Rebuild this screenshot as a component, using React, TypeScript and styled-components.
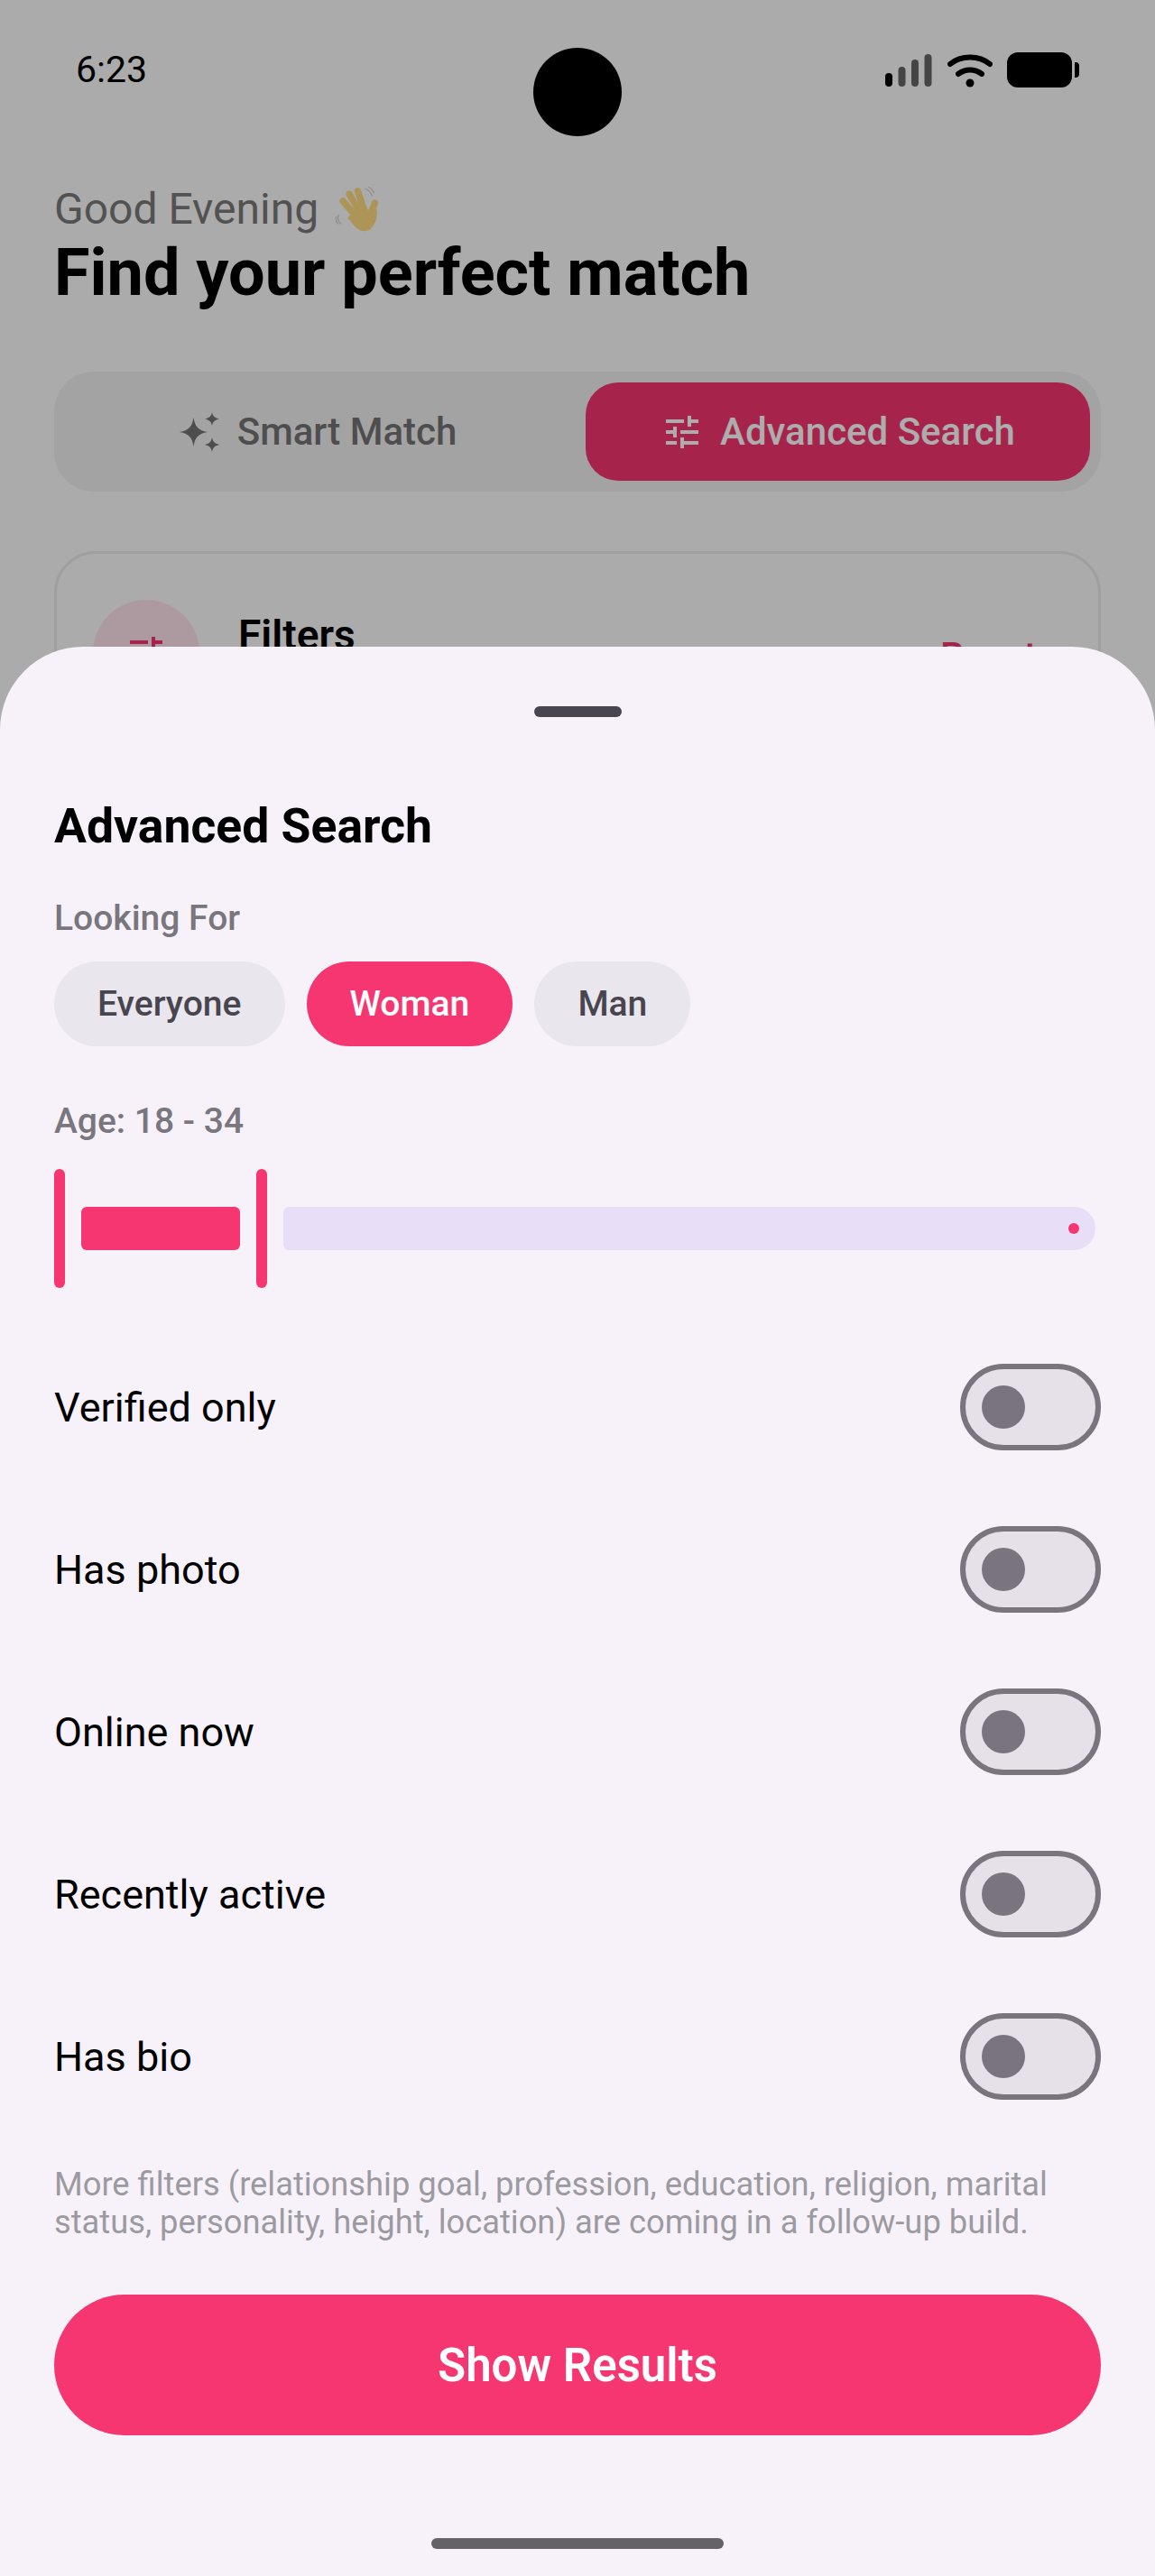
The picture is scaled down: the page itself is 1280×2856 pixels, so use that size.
import React from "react";
import styled, { createGlobalStyle } from "styled-components";

const GlobalStyle = createGlobalStyle`
  html, body {
    margin: 0;
    padding: 0;
    background: #ffffff;
    font-family: Roboto, "Liberation Sans", sans-serif;
  }
`;

const Screen = styled.div`
  position: relative;
  width: 1280px;
  height: 2856px;
  overflow: hidden;
  background: #fcfcfc;
`;

const Behind = styled.div`
  display: flex;
  flex-direction: column;
  padding: 0 60px;
`;

const StatusBar = styled.div`
  height: 204px;
  margin: 0 24px;
  padding-top: 54px;
  box-sizing: border-box;
  display: flex;
  justify-content: space-between;
  align-items: flex-start;
`;

const Clock = styled.span`
  font-size: 41px;
  line-height: 47px;
  color: #000;
`;

const StatusIcons = styled.div`
  display: flex;
  align-items: flex-start;
  padding-top: 4px;
`;

const Camera = styled.div`
  position: absolute;
  left: 591px;
  top: 53px;
  width: 98px;
  height: 98px;
  border-radius: 50%;
  background: #000;
  z-index: 3;
`;

const Greeting = styled.div`
  display: flex;
  align-items: center;
  gap: 9px;
  font-size: 48px;
  line-height: 56px;
  color: #7a7a7a;
  height: 56px;
`;

const Title = styled.h1`
  margin: 1px 0 0;
  font-size: 72px;
  line-height: 84px;
  font-weight: 700;
  color: #000;
`;

const Tabs = styled.div`
  margin-top: 67px;
  height: 133px;
  box-sizing: border-box;
  padding: 12px;
  border-radius: 44px;
  background: #f1f1f1;
  display: grid;
  grid-template-columns: 577px 559px;
`;

const Tab = styled.div<{ $active?: boolean }>`
  border-radius: 36px;
  display: flex;
  align-items: center;
  justify-content: center;
  gap: 18px;
  font-size: 42px;
  font-weight: 500;
  color: ${(p) => (p.$active ? "#fff" : "#747474")};
  background: ${(p) => (p.$active ? "#f53670" : "transparent")};
  padding-right: ${(p) => (p.$active ? "0" : "18px")};
`;

const FilterCard = styled.div`
  margin-top: 66px;
  height: 400px;
  box-sizing: border-box;
  border: 3px solid #ebebeb;
  border-radius: 46px;
  padding: 51px 68px 0 40px;
  display: flex;
  align-items: flex-start;
  gap: 43px;
`;

const IconDisc = styled.div`
  width: 118px;
  height: 118px;
  border-radius: 50%;
  background: #ffe4ed;
  display: flex;
  align-items: center;
  justify-content: center;
`;

const FilterLabel = styled.span`
  flex: 1;
  font-size: 46px;
  line-height: 54px;
  font-weight: 600;
  color: #000;
  margin-top: 12px;
`;

const ResetLink = styled.span`
  font-size: 42px;
  line-height: 50px;
  font-weight: 500;
  color: #f53670;
  margin-top: 38px;
`;

const Scrim = styled.div`
  position: absolute;
  inset: 0;
  background: rgba(0, 0, 0, 0.32);
  z-index: 1;
`;

const Sheet = styled.div`
  position: absolute;
  left: 0;
  right: 0;
  top: 717px;
  bottom: 0;
  z-index: 2;
  box-sizing: border-box;
  background: #f7f2fa;
  border-radius: 92px 92px 0 0;
  padding: 0 60px;
  display: flex;
  flex-direction: column;
`;

const Grabber = styled.div`
  align-self: center;
  width: 97px;
  height: 12px;
  margin-top: 66px;
  border-radius: 6px;
  background: #49454f;
`;

const SheetTitle = styled.h2`
  margin: 90px 0 0;
  font-size: 53.5px;
  line-height: 62px;
  font-weight: 700;
  color: #000;
`;

const SectionLabel = styled.div<{ $top: number }>`
  margin-top: ${(p) => p.$top}px;
  font-size: 39px;
  line-height: 46px;
  font-weight: 500;
  color: #79767d;
`;

const Chips = styled.div`
  display: flex;
  gap: 24px;
  margin-top: 25px;
`;

const Chip = styled.div<{ $active?: boolean }>`
  height: 94px;
  padding: 0 48px;
  border-radius: 47px;
  display: flex;
  align-items: center;
  font-size: 39.1px;
  font-weight: 500;
  color: ${(p) => (p.$active ? "#fff" : "#49454f")};
  background: ${(p) => (p.$active ? "#f53670" : "#e9e7ed")};
`;

const Slider = styled.div`
  margin-top: 30px;
  height: 132px;
  display: flex;
  align-items: center;
  width: 1154px;
`;

const Handle = styled.div`
  width: 12px;
  height: 132px;
  border-radius: 6px;
  background: #f53670;
  flex: none;
`;

const ActiveTrack = styled.div`
  width: 176px;
  height: 48px;
  margin: 0 18px;
  border-radius: 6px;
  background: #f53670;
  flex: none;
`;

const InactiveTrack = styled.div`
  flex: 1;
  height: 48px;
  margin-left: 18px;
  border-radius: 6px 24px 24px 6px;
  background: #e8def8;
  display: flex;
  align-items: center;
  justify-content: flex-end;
  padding-right: 18px;
`;

const StopDot = styled.div`
  width: 12px;
  height: 12px;
  border-radius: 50%;
  background: #f53670;
`;

const Rows = styled.div`
  display: flex;
  flex-direction: column;
  margin-top: 42px;
`;

const Row = styled.div`
  height: 180px;
  display: flex;
  align-items: center;
  justify-content: space-between;
  font-size: 45px;
  color: #000;
`;

const Switch = styled.div`
  width: 156px;
  height: 96px;
  box-sizing: border-box;
  border: 6px solid #79747e;
  border-radius: 48px;
  background: #e6e0e9;
  display: flex;
  align-items: center;
  padding-left: 18px;
`;

const Thumb = styled.div`
  width: 48px;
  height: 48px;
  border-radius: 50%;
  background: #79747e;
`;

const Note = styled.p`
  margin: 31px 0 0;
  font-size: 36.3px;
  line-height: 42px;
  color: #9c9aa1;
`;

const ResultsButton = styled.div`
  margin-top: 59px;
  height: 156px;
  border-radius: 78px;
  background: #f53670;
  display: flex;
  align-items: center;
  justify-content: center;
  font-size: 51px;
  font-weight: 600;
  color: #fff;
`;

const HomeBar = styled.div`
  align-self: center;
  width: 324px;
  height: 12px;
  margin-top: 114px;
  border-radius: 6px;
  background: #646266;
`;

const TuneIcon = ({ color }: { color: string }) => (
  <svg width="48" height="48" viewBox="0 0 24 24" fill={color}>
    <path d="M3 17v2h6v-2H3zM3 5v2h10V5H3zm10 16v-2h8v-2h-8v-2h-2v6h2zM7 9v2H3v2h4v2h2V9H7zm14 4v-2H11v2h10zm-6-4h2V7h4V5h-4V3h-2v6z" />
  </svg>
);

const SparkleIcon = () => (
  <svg width="48" height="48" viewBox="0 0 48 48" fill="#747474">
    <path d="M17.500 8c1.600 9.500 4.500 14 15.500 16-11 2-13.900 6.500-15.500 16-1.600-9.500-4.500-14-15.500-16 11-2 13.900-6.500 15.500-16z" />
    <path d="M38 2c.9 4.200 2.200 6 8 7.500-5.800 1.500-7.100 3.300-8 7.500-.9-4.200-2.200-6-8-7.500 5.800-1.500 7.100-3.300 8-7.500z" />
    <path d="M38 30c.9 4.400 2.200 6.300 8 8-5.800 1.700-7.100 3.600-8 8-.9-4.400-2.200-6.300-8-8 5.800-1.700 7.100-3.600 8-8z" />
  </svg>
);

const WaveHand = () => (
  <svg width="70" height="70" viewBox="0 0 210 210" style={{ marginTop: -4, flex: "none" }}>
    <g stroke="#ffdc82" strokeWidth="22" strokeLinecap="round" fill="none">
      <path d="M54 84l42 48" />
      <path d="M75 60l36 62" />
      <path d="M103 50l24 70" />
      <path d="M160 90l-14 40" />
    </g>
    <path
      d="M88 118l78-8c5 22-2 50-20 66-14 12-34 9-46-2-10-9-20-24-30-34z"
      fill="#ffdc82"
    />
    <path d="M128 42c12 5 20 14 24 26M138 36c10 5 17 13 20 22" stroke="#d1d1d1" strokeWidth="4" fill="none" />
    <path d="M40 128c-5 12-1 24 8 32M32 136c-3 9 0 18 6 24" stroke="#d1d1d1" strokeWidth="4" fill="none" />
  </svg>
);

const SignalIcon = () => (
  <svg width="54" height="38" viewBox="0 0 54 38" style={{ marginTop: 2 }}>
    <rect x="0" y="21" width="8" height="15" rx="4" fill="#000" />
    <rect x="14.500" y="14" width="8" height="22" rx="4" fill="#666" />
    <rect x="29" y="6" width="8" height="30" rx="4" fill="#666" />
    <rect x="43.500" y="0" width="8" height="36" rx="4" fill="#666" />
  </svg>
);

const WifiIcon = () => (
  <svg width="50" height="38" viewBox="0 0 50 38" style={{ marginLeft: 15, marginTop: 2 }}>
    <path d="M3 11C15 1 35 1 47 11" stroke="#000" strokeWidth="6" strokeLinecap="round" fill="none" />
    <path d="M12 22c8-6 18-6 26 0" stroke="#000" strokeWidth="6" strokeLinecap="round" fill="none" />
    <circle cx="25" cy="32" r="4.500" fill="#000" />
  </svg>
);

const BatteryIcon = () => (
  <svg width="80" height="40" viewBox="0 0 80 40" style={{ marginLeft: 16 }}>
    <rect x="0" y="0" width="72" height="39" rx="12" fill="#000" />
    <path d="M75 11h1c3 0 4 2 4 4v9c0 2-1 4-4 4h-1z" fill="#000" />
  </svg>
);

const rows = ["Verified only", "Has photo", "Online now", "Recently active", "Has bio"];

const App = () => {
  return (
    <Screen>
      <GlobalStyle />
      <Behind>
        <StatusBar>
          <Clock>6:23</Clock>
          <StatusIcons>
            <SignalIcon />
            <WifiIcon />
            <BatteryIcon />
          </StatusIcons>
        </StatusBar>
        <Greeting>
          Good Evening <WaveHand />
        </Greeting>
        <Title>Find your perfect match</Title>
        <Tabs>
          <Tab>
            <SparkleIcon />
            Smart Match
          </Tab>
          <Tab $active>
            <TuneIcon color="#fff" />
            Advanced Search
          </Tab>
        </Tabs>
        <FilterCard>
          <IconDisc>
            <TuneIcon color="#f53670" />
          </IconDisc>
          <FilterLabel>Filters</FilterLabel>
          <ResetLink>Reset</ResetLink>
        </FilterCard>
      </Behind>
      <Scrim />
      <Camera />
      <Sheet>
        <Grabber />
        <SheetTitle>Advanced Search</SheetTitle>
        <SectionLabel $top={48}>Looking For</SectionLabel>
        <Chips>
          <Chip>Everyone</Chip>
          <Chip $active>Woman</Chip>
          <Chip>Man</Chip>
        </Chips>
        <SectionLabel $top={60}>Age: 18 - 34</SectionLabel>
        <Slider>
          <Handle />
          <ActiveTrack />
          <Handle />
          <InactiveTrack>
            <StopDot />
          </InactiveTrack>
        </Slider>
        <Rows>
          {rows.map((label) => (
            <Row key={label}>
              {label}
              <Switch>
                <Thumb />
              </Switch>
            </Row>
          ))}
        </Rows>
        <Note>
          More filters (relationship goal, profession, education, religion, marital
          <br />
          status, personality, height, location) are coming in a follow-up build.
        </Note>
        <ResultsButton>Show Results</ResultsButton>
        <HomeBar />
      </Sheet>
    </Screen>
  );
};

export default App;
